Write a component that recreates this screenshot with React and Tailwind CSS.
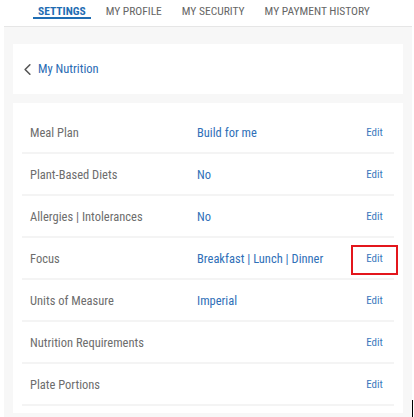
import { ChevronLeft } from 'lucide-react';

const font = { fontFamily: '"Roboto Condensed", "Liberation Sans Narrow", "DejaVu Sans Condensed", Roboto, sans-serif' };

const tabs = ['SETTINGS', 'MY PROFILE', 'MY SECURITY', 'MY PAYMENT HISTORY'];

const rows = [
  { label: 'Meal Plan', value: 'Build for me' },
  { label: 'Plant-Based Diets', value: 'No' },
  { label: 'Allergies | Intolerances', value: 'No' },
  { label: 'Focus', value: 'Breakfast | Lunch | Dinner', highlight: true },
  { label: 'Units of Measure', value: 'Imperial' },
  { label: 'Nutrition Requirements', value: '' },
  { label: 'Plate Portions', value: '' },
];

export default function App() {
  return (
    <div className="w-[414px] h-[417px] bg-white overflow-hidden relative" style={font}>
      {/* tabs */}
      <div className="h-[26px] flex items-start pl-[33px] gap-[10px] pt-[5px]">
        {tabs.map((t, i) => (
          <div
            key={t}
            className={
              i === 0
                ? 'px-[5px] text-[11.5px] leading-[12px] font-bold text-[#1f6db3] border-b-2 border-[#1f6db3]'
                : 'px-[5px] text-[11.5px] leading-[12px] text-[#666]'
            }
          >
            {t}
          </div>
        ))}
      </div>

      <div className="mx-[4px] mr-[2px] h-[391px] bg-[#f7f7f7] border-t border-[#e6e6e6] px-[9px] pt-[17px]">
        <div className="h-[50px] bg-white flex items-center pl-[5px]">
          <ChevronLeft size={19} strokeWidth={2} className="text-[#555]" />
          <span className="ml-[1px] text-[12.5px] text-[#2a6cb4]">My Nutrition</span>
        </div>

        <div className="mt-[9px] h-[310px] bg-white px-[9px] pt-[9px]">
          {rows.map((r) => (
            <div key={r.label} className="h-[42px] pt-[3px] flex items-center border-b-2 border-[#f4f4f4]">
              <span className="w-[175px] pl-[8px] text-[12.5px] text-[#6d6d6d]">{r.label}</span>
              <span className="flex-1 text-[12.5px] text-[#2f70b8]">{r.value}</span>
              <span
                className={
                  r.highlight
                    ? 'w-[47px] h-[30px] mr-[-4px] flex items-center justify-center border-2 border-[#e3161c] text-[11px] text-[#3a78bd]'
                    : 'w-[47px] h-[30px] mr-[-4px] flex items-center justify-center border-2 border-transparent text-[11px] text-[#3a78bd]'
                }
              >
                Edit
              </span>
            </div>
          ))}
        </div>
      </div>

      <div className="absolute left-[412px] top-[400px] w-px h-[17px] bg-black" />
    </div>
  );
}
